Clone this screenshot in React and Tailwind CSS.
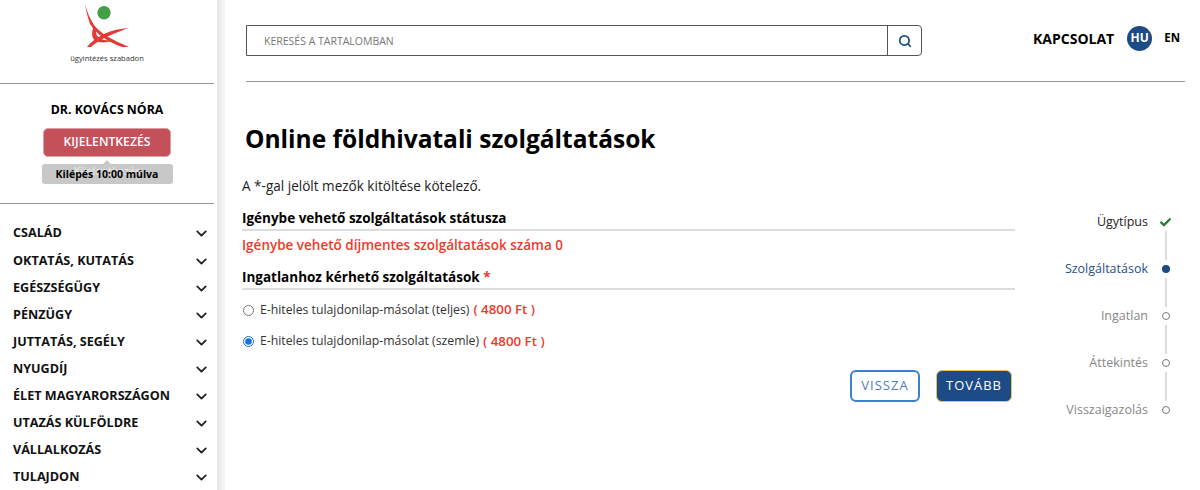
import React from 'react';
import { ChevronDown, Search, Check } from 'lucide-react';

const menu = ['CSALÁD', 'OKTATÁS, KUTATÁS', 'EGÉSZSÉGÜGY', 'PÉNZÜGY', 'JUTTATÁS, SEGÉLY', 'NYUGDÍJ', 'ÉLET MAGYARORSZÁGON', 'UTAZÁS KÜLFÖLDRE', 'VÁLLALKOZÁS', 'TULAJDON'];

const steps = [
  { label: 'Ügytípus', state: 'done' },
  { label: 'Szolgáltatások', state: 'active' },
  { label: 'Ingatlan', state: 'todo' },
  { label: 'Áttekintés', state: 'todo' },
  { label: 'Visszaigazolás', state: 'todo' },
];

function Logo() {
  return (
    <svg width="46" height="46" viewBox="0 0 46 46" className="block">
      <circle cx="20" cy="8.7" r="6.7" fill="#43a047" />
      <path d="M1 0 C3 8 6 15 10 21 C16 29 28 36 45 43 L38 43 C24 38 11 29 6 20 C4 14 2 7 1 0Z" fill="#e53935" />
      <path d="M3 43 C12 32 27 25 45 24 C33 28 17 34 7 43Z" fill="#e53935" />
      <path d="M10 22 C7 28 7 36 14 38 C20 39 26 38 31 36 C24 37 11 37 12 26Z" fill="#e53935" />
    </svg>
  );
}

function Sidebar() {
  return (
    <aside className="w-[217px] h-[490px] shrink-0 bg-white overflow-hidden">
      <div className="w-[214px] h-[84px] border-b border-[#999] flex flex-col items-center pt-[4px]">
        <div className="ml-[-1px]"><Logo /></div>
        <div className="text-[7.6px] leading-[12px] mt-[2px] text-[#333]">ügyintézés szabadon</div>
      </div>
      <div className="w-[214px] h-[120px] border-b border-[#999] flex flex-col items-center">
        <div className="mt-[17px] text-[12.3px] leading-[18px] font-bold text-black">DR. KOVÁCS NÓRA</div>
        <button className="mt-[9px] w-[128px] h-[29px] rounded-[5px] bg-[#c4505a] border border-[#d9a0a5] text-white text-[12.2px] font-semibold">KIJELENTKEZÉS</button>
        <div className="relative mt-[7px] w-[131px] h-[20px] rounded-[3px] bg-[#c8c8c8] text-[10.5px] leading-[20px] font-bold text-black text-center">
          <div className="absolute left-[61px] top-[-4px] w-0 h-0 border-x-[4px] border-x-transparent border-b-[4px] border-b-[#c8c8c8]" />
          <span className="absolute inset-x-0 top-[-3px] text-[#e4e4e4] font-semibold">Kijelentkezés</span>
          <span className="relative">Kilépés 10:00 múlva</span>
        </div>
      </div>
      <ul className="pt-[16.4px]">
        {menu.map((m) => (
          <li key={m} className="h-[27.1px] flex items-center justify-between pl-[13px] pr-[7px] text-[12.6px] font-bold text-[#111]">
            <span>{m}</span>
            <ChevronDown className="w-[17px] h-[17px] text-[#222]" strokeWidth={2.5} />
          </li>
        ))}
      </ul>
    </aside>
  );
}

function Header() {
  return (
    <div className="h-[82px] border-b border-[#999] ml-[1px] w-[939px] flex items-start">
      <div className="mt-[25px] w-[676px] h-[31px] flex border border-[#555] rounded-r-[4px]">
        <div className="flex-1 pl-[17px] text-[10.5px] leading-[30px] text-[#777]">KERESÉS A TARTALOMBAN</div>
        <div className="w-[34px] border-l border-[#555] flex items-center justify-center">
          <Search className="w-[14px] h-[14px] text-[#1d4b85]" strokeWidth={3} />
        </div>
      </div>
    </div>
  );
}

function Stepper() {
  return (
    <div className="w-[140px] mt-[131px] ml-[17px] flex flex-col items-end">
      {steps.map((s, i) => (
        <div key={s.label} className="flex flex-col items-end">
          <div className="flex items-center h-[18px]">
            <span className={`text-[12.5px] ${s.state === 'done' ? 'text-[#222]' : s.state === 'active' ? 'text-[#2a5288]' : 'text-[#888]'}`}>{s.label}</span>
            <span className="w-[13px] ml-[11px] flex justify-center">
              {s.state === 'done' && <Check className="w-[13px] h-[13px] text-[#2e7d32]" strokeWidth={4.5} />}
              {s.state === 'active' && <span className="w-[8px] h-[8px] rounded-full bg-[#1d4b85]" />}
              {s.state === 'todo' && <span className="w-[8px] h-[8px] rounded-full border-[1.5px] border-[#777] bg-white" />}
            </span>
          </div>
          {i < steps.length - 1 && <div className="w-[2px] h-[29px] bg-[#ddd] mr-[5.5px]" />}
        </div>
      ))}
    </div>
  );
}

function Radio({ checked, label }) {
  return (
    <label className="flex items-center h-[20px]">
      <input type="radio" name="szolg" defaultChecked={checked} className="w-[11px] h-[11px] m-0 ml-[1px] accent-[#1a6fe0]" />
      <span className="ml-[6px] text-[12.25px] text-[#333]">{label}</span>
      <span className="ml-[4px] text-[13.3px] font-semibold text-[#f0392b]">( 4800 Ft )</span>
    </label>
  );
}

function Main() {
  return (
    <div className="w-[773px] flex flex-col">
      <h1 className="ml-[3px] mt-[39px] text-[24.5px] leading-[36px] font-bold text-black">Online földhivatali szolgáltatások</h1>
      <p className="mt-[19px] text-[13.55px] leading-[20px] text-[#222]">A *-gal jelölt mezők kitöltése kötelező.</p>
      <h2 className="mt-[12px] h-[23px] border-b-2 border-[#ddd] text-[13.5px] leading-[20px] font-bold text-black">Igénybe vehető szolgáltatások státusza</h2>
      <p className="mt-[4px] text-[13.5px] leading-[20px] font-semibold text-[#f0392b]">Igénybe vehető díjmentes szolgáltatások száma 0</p>
      <h2 className="mt-[12px] h-[23px] border-b-2 border-[#ddd] text-[13.5px] leading-[20px] font-bold text-black">Ingatlanhoz kérhető szolgáltatások <span className="text-[#f0392b]">*</span></h2>
      <div className="mt-[10px] flex flex-col gap-[11.5px]">
        <Radio label="E-hiteles tulajdonilap-másolat (teljes)" />
        <Radio checked label="E-hiteles tulajdonilap-másolat (szemle)" />
      </div>
      <div className="mt-[18px] flex justify-end gap-[16px] mr-[3px]">
        <button className="w-[70px] h-[32px] rounded-[6px] border-2 border-[#3f7fd0] bg-white text-[13px] tracking-[1px] text-[#4a7cc0]">VISSZA</button>
        <button className="w-[76px] h-[32px] rounded-[6px] border border-[#e0c850] bg-[#1d4b85] text-[13px] tracking-[1px] text-white">TOVÁBB</button>
      </div>
    </div>
  );
}

export default function App() {
  return (
    <div className="w-[1200px] h-[490px] relative overflow-hidden flex bg-white font-['Open_Sans',sans-serif]">
      <Sidebar />
      <div className="w-[8px] h-[490px] shrink-0 bg-gradient-to-r from-[#e4e4e4] to-[#f8f8f8]" />
      <div className="flex-1 pl-[20px]">
        <Header />
        <div className="flex ml-[-3px]">
          <Main />
          <Stepper />
        </div>
      </div>
      <div className="absolute left-[1033px] top-[27px] flex items-center h-[22px]">
        <span className="text-[14px] font-bold text-black">KAPCSOLAT</span>
        <span className="ml-[13px] w-[25px] h-[25px] rounded-full bg-[#1d4b85] text-white text-[12px] font-bold flex items-center justify-center">HU</span>
        <span className="ml-[12px] text-[11.5px] font-bold text-black">EN</span>
      </div>
    </div>
  );
}
